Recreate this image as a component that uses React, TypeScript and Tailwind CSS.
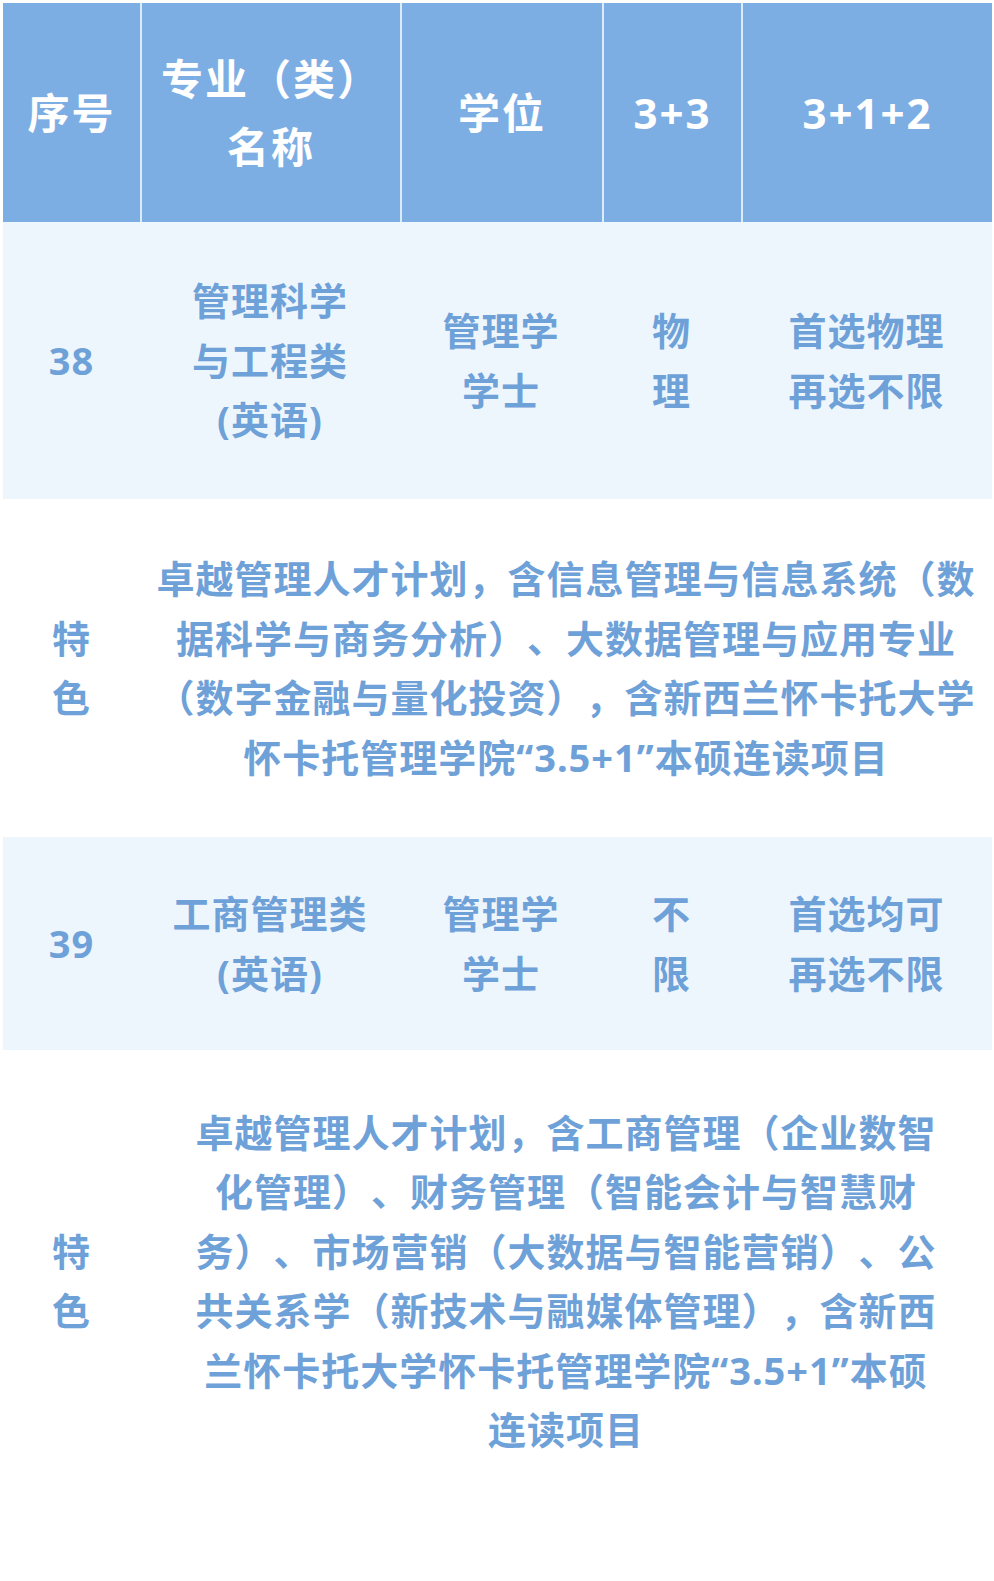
import React from "react";

// 招生专业表（片段）：表头 + 两个专业及其特色说明

const COLS = "grid grid-cols-[137px_260px_202px_139px_1fr]";

function Lines({ lines, className = "" }: { lines: string[]; className?: string }) {
  return (
    <div className={"text-center whitespace-nowrap " + className}>
      {lines.map((l, i) => (
        <span key={i} className="block">
          {l}
        </span>
      ))}
    </div>
  );
}

function HeaderCell({ lines, first = false }: { lines: string[]; first?: boolean }) {
  return (
    <div
      className={
        "flex items-center justify-center " + (first ? "" : "border-l-2 border-[#dcebf9]")
      }
    >
      <Lines lines={lines} className="leading-[68px]" />
    </div>
  );
}

function MajorRow({
  no,
  name,
  degree,
  subj33,
  subj312,
  height,
}: {
  no: string;
  name: string[];
  degree: string[];
  subj33: string[];
  subj312: string[];
  height: string;
}) {
  const cell = "flex items-center justify-center";
  return (
    <div className={`${COLS} ${height} bg-[#eef6fd] leading-[59.5px]`}>
      <div className={cell}>
        <span>{no}</span>
      </div>
      <div className={cell}>
        <Lines lines={name} />
      </div>
      <div className={cell}>
        <Lines lines={degree} />
      </div>
      <div className={cell}>
        <Lines lines={subj33} />
      </div>
      <div className={cell}>
        <Lines lines={subj312} />
      </div>
    </div>
  );
}

function FeatureRow({ lines, height }: { lines: string[]; height: string }) {
  return (
    <div className={`grid grid-cols-[137px_1fr] ${height} bg-white leading-[59.5px]`}>
      <div className="flex items-center justify-center">
        <Lines lines={["特", "色"]} />
      </div>
      <div className="flex items-center justify-center">
        <Lines lines={lines} />
      </div>
    </div>
  );
}

export default function App() {
  return (
    <div className="min-h-[1581px] bg-white pl-[3px] pt-[3px] font-['Noto_Sans','Noto_Sans_CJK_SC',sans-serif] font-bold [text-spacing-trim:space-all]">
      <div className="w-[989px]">
        {/* 表头 */}
        <div
          className={`${COLS} h-[219px] bg-[#7caee4] text-[42px] tracking-[2px] text-white`}
        >
          <HeaderCell lines={["序号"]} first />
          <HeaderCell lines={["专业（类）", "名称"]} />
          <HeaderCell lines={["学位"]} />
          <HeaderCell lines={["3+3"]} />
          <HeaderCell lines={["3+1+2"]} />
        </div>

        <div className="text-[38px] tracking-[1px] text-[#6fa1d9]">
          <MajorRow
            no="38"
            name={["管理科学", "与工程类", "(英语)"]}
            degree={["管理学", "学士"]}
            subj33={["物", "理"]}
            subj312={["首选物理", "再选不限"]}
            height="h-[277px]"
          />
          <FeatureRow
            height="h-[338px]"
            lines={[
              "卓越管理人才计划，含信息管理与信息系统（数",
              "据科学与商务分析）、大数据管理与应用专业",
              "（数字金融与量化投资），含新西兰怀卡托大学",
              "怀卡托管理学院“3.5+1”本硕连读项目",
            ]}
          />
          <MajorRow
            no="39"
            name={["工商管理类", "(英语)"]}
            degree={["管理学", "学士"]}
            subj33={["不", "限"]}
            subj312={["首选均可", "再选不限"]}
            height="h-[213px]"
          />
          <FeatureRow
            height="h-[462px]"
            lines={[
              "卓越管理人才计划，含工商管理（企业数智",
              "化管理）、财务管理（智能会计与智慧财",
              "务）、市场营销（大数据与智能营销）、公",
              "共关系学（新技术与融媒体管理），含新西",
              "兰怀卡托大学怀卡托管理学院“3.5+1”本硕",
              "连读项目",
            ]}
          />
        </div>
      </div>
    </div>
  );
}
